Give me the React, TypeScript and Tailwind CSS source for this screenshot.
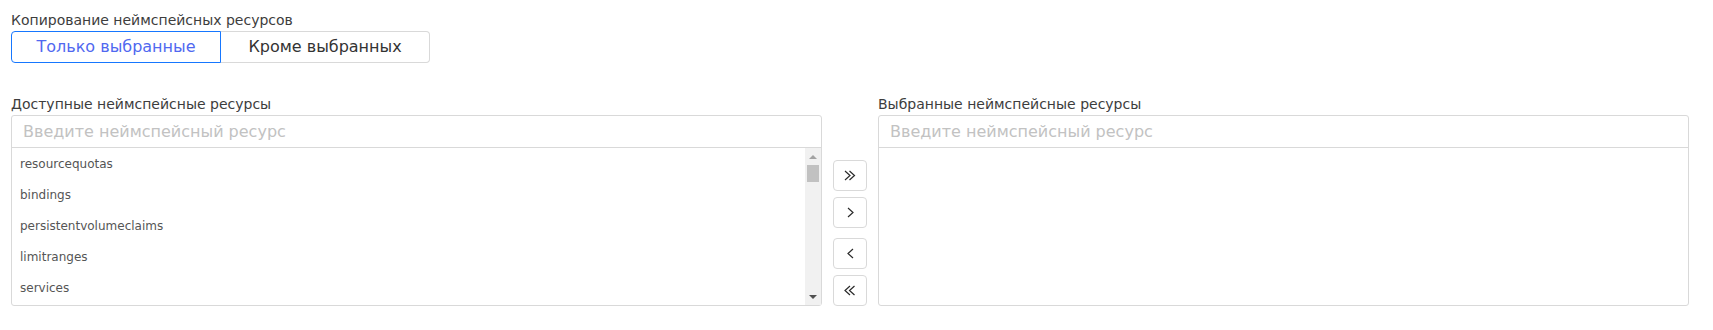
import { useState } from 'react'

const available = ['resourcequotas', 'bindings', 'persistentvolumeclaims', 'limitranges', 'services']

function Chevron({ dir, double }: { dir: 'left' | 'right'; double?: boolean }) {
  const one = dir === 'right' ? 'M0 0 L5 4.5 L0 9' : 'M5 0 L0 4.5 L5 9'
  return (
    <svg width={double ? 12 : 7} height="11" viewBox={double ? '-1 -1 12 11' : '-1 -1 7 11'} fill="none" stroke="#2a2a2a" strokeWidth="1.2">
      <path d={one} />
      {double && <path d={one} transform="translate(4.5 0)" />}
    </svg>
  )
}

function Panel({ title, items, scroll }: { title: string; items: string[]; scroll?: boolean }) {
  return (
    <div className="flex-1 flex flex-col min-w-0">
      <div className="text-[14px] leading-[20px] text-[#3d3d3d] mb-px">{title}</div>
      <div className="border border-[#d9d9d9] rounded-[3px] flex flex-col h-[191px]">
        <input
          placeholder="Введите неймспейсный ресурс"
          className="h-[32px] px-[11px] text-[16px] outline-none border-b border-[#d9d9d9] placeholder:text-[#c2c2c2] bg-transparent"
        />
        <div className="flex flex-1 min-h-0">
          <div className="flex-1 overflow-hidden">
            {items.map(i => (
              <div key={i} className="h-[31px] px-[8px] flex items-center text-[12px] text-[#555]">{i}</div>
            ))}
          </div>
          {scroll && (
            <div className="w-[16px] bg-[#f1f1f1] flex flex-col items-center">
              <div className="h-[17px] flex items-center justify-center">
                <div className="w-0 h-0 border-x-[4px] border-x-transparent border-b-[4px] border-b-[#a3a3a3]" />
              </div>
              <div className="w-[12px] h-[17px] bg-[#c1c1c1]" />
              <div className="flex-1" />
              <div className="h-[17px] flex items-center justify-center">
                <div className="w-0 h-0 border-x-[4px] border-x-transparent border-t-[4px] border-t-[#505050]" />
              </div>
            </div>
          )}
        </div>
      </div>
    </div>
  )
}

export default function App() {
  const [mode, setMode] = useState<'only' | 'except'>('only')

  return (
    <div className="min-h-screen bg-white pt-[10px] pl-[11px] pr-[24px] font-['DejaVu_Sans',sans-serif]">
      <div className="text-[14px] leading-[20px] text-[#3d3d3d] mb-px">Копирование неймспейсных ресурсов</div>

      <div className="flex w-[419px] h-[32px]">
        <button
          onClick={() => setMode('only')}
          className={`flex-1 text-[16px] rounded-l-[4px] border ${mode === 'only' ? 'border-[#1677ff] text-[#5068f0] z-10' : 'border-[#d9d9d9] text-[#333]'}`}
        >
          Только выбранные
        </button>
        <button
          onClick={() => setMode('except')}
          className={`flex-1 text-[16px] rounded-r-[4px] border -ml-px ${mode === 'except' ? 'border-[#1677ff] text-[#5068f0] z-10' : 'border-[#d9d9d9] border-l-transparent text-[#333]'}`}
        >
          Кроме выбранных
        </button>
      </div>

      <div className="flex gap-[11px] mt-[31px]">
        <Panel title="Доступные неймспейсные ресурсы" items={available} scroll />

        <div className="flex flex-col self-end w-[34px]">
          <button className="h-[31px] border border-[#d9d9d9] rounded-[4px] flex items-center justify-center"><Chevron dir="right" double /></button>
          <button className="h-[31px] mt-[6px] border border-[#d9d9d9] rounded-[4px] flex items-center justify-center"><Chevron dir="right" /></button>
          <button className="h-[31px] mt-[10px] border border-[#d9d9d9] rounded-[4px] flex items-center justify-center"><Chevron dir="left" /></button>
          <button className="h-[31px] mt-[6px] border border-[#d9d9d9] rounded-[4px] flex items-center justify-center"><Chevron dir="left" double /></button>
        </div>

        <Panel title="Выбранные неймспейсные ресурсы" items={[]} />
      </div>
    </div>
  )
}
